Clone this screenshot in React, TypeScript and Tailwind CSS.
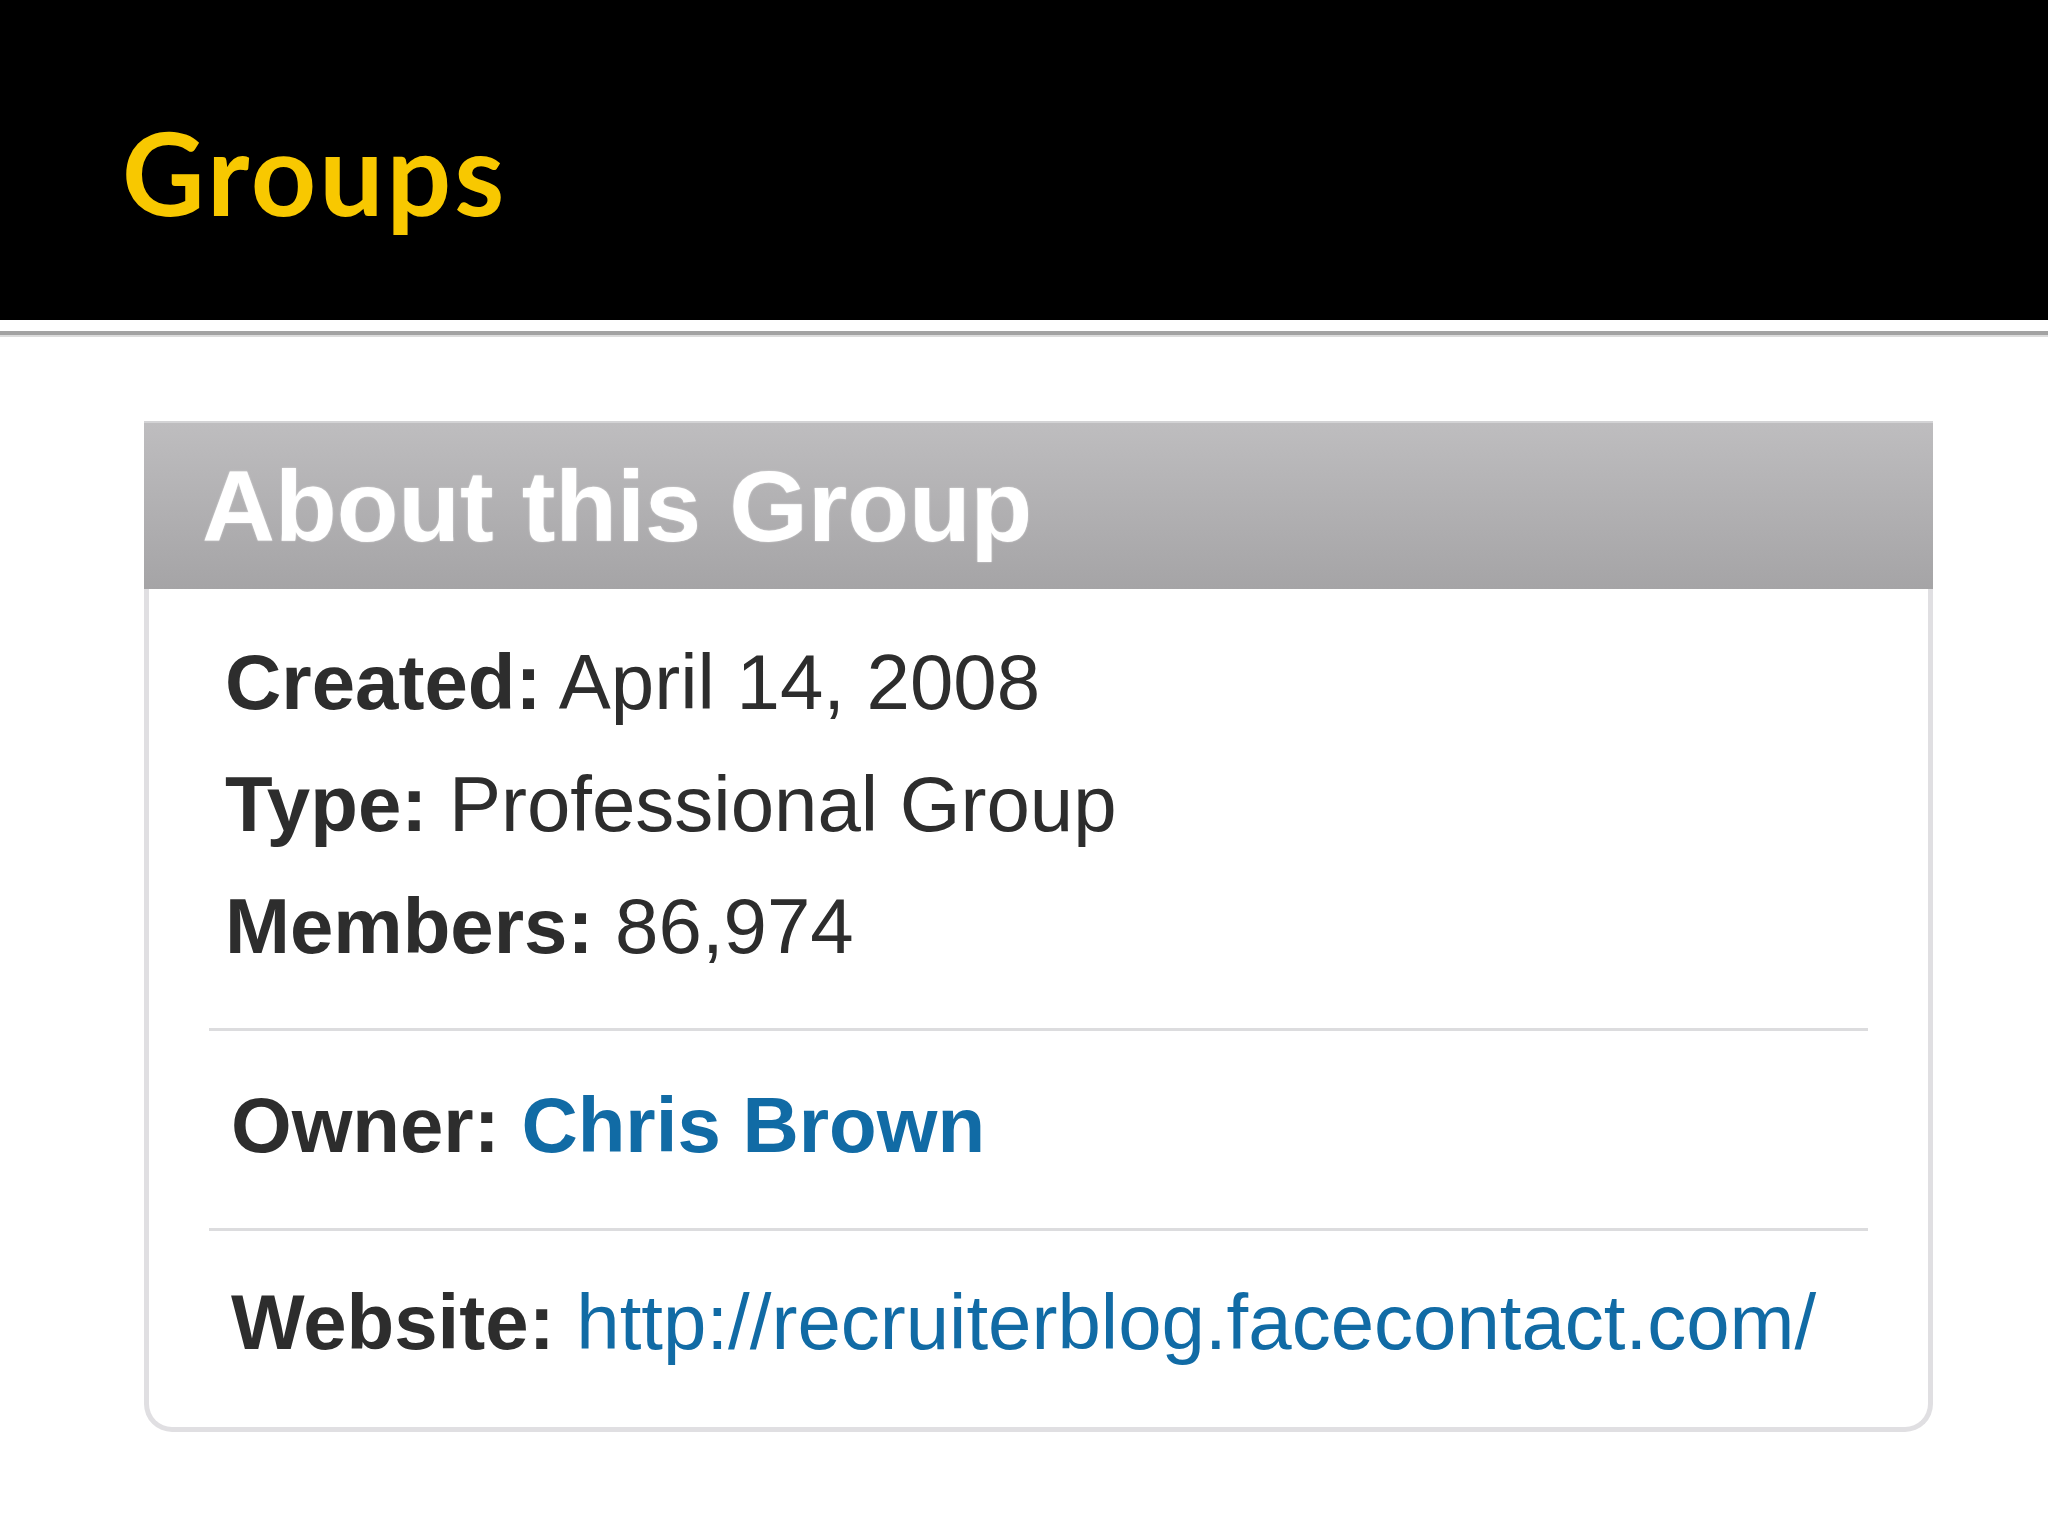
export default function App() {
  const body = "font-['Liberation_Sans',Arial,sans-serif]";
  return (
    <div className="w-[2048px] h-[1536px] bg-white overflow-hidden">
      <div className="h-[320px] bg-black pl-[122px] pt-[115px]">
        <h1 className="font-['Lato',sans-serif] font-bold text-[114px] tracking-[3px] leading-none text-[#f8c800] m-0">
          Groups
        </h1>
      </div>
      <div className="h-[11px] bg-white" />
      <div className="h-[4px] bg-[#a3a3a3]" />
      <div className="h-[2px] bg-[#dcdcdc]" />

      <div className={`mt-[84px] ml-[144px] w-[1789px] ${body}`}>
        <div className="h-[168px] border-t-2 border-[#d3d3d5] bg-gradient-to-b from-[#bebdbf] to-[#a5a4a6] flex items-center pl-[58px]">
          <span className="text-white font-bold text-[101px] leading-none [text-shadow:0_0_2px_rgba(255,255,255,0.6)]">
            About this Group
          </span>
        </div>
        <div className="border-x-[5px] border-b-[5px] border-[#e0dfe2] rounded-b-[28px] pt-[32px] pb-[44px] text-[78px] leading-[122px] text-[#2d2d2d]">
          <div className="pl-[76px]">
            <div>
              <span className="font-bold">Created:</span> April 14, 2008
            </div>
            <div>
              <span className="font-bold">Type:</span> Professional Group
            </div>
            <div>
              <span className="font-bold">Members:</span> 86,974
            </div>
          </div>
          <div className="mt-[41px] mx-[60px] h-[3px] bg-[#dcdcde]" />
          <div className="mt-[33px] pl-[82px]">
            <span className="font-bold">Owner:</span>{" "}
            <span className="font-bold text-[#116ba5]">Chris Brown</span>
          </div>
          <div className="mt-[42px] mx-[60px] h-[3px] bg-[#dcdcde]" />
          <div className="mt-[30px] pl-[82px]">
            <span className="font-bold">Website:</span>{" "}
            <span className="text-[#116ba5]">http://recruiterblog.facecontact.com/</span>
          </div>
        </div>
      </div>
    </div>
  );
}
